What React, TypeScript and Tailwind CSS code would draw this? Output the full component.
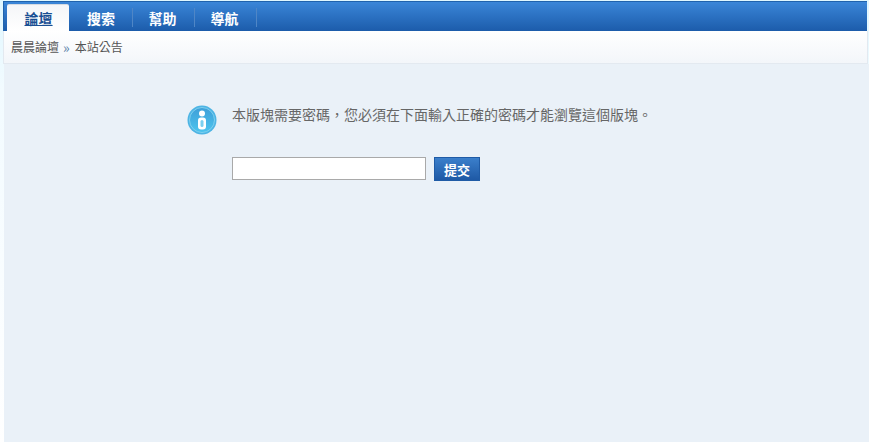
export default function App() {
  const font = { fontFamily: '"Noto Sans CJK TC", "Liberation Sans", sans-serif' };
  return (
    <div className="h-[444px] w-[869px] overflow-hidden bg-gradient-to-b from-[#dff7ff] via-[#f2fbff] via-20% to-white pl-[3px] pt-px" style={font}>
      <div className="mr-[2px] flex h-[30px] border-t border-l border-[#1f63ad] bg-gradient-to-b from-[#3a86d8] to-[#1c5cab] pl-[3px]">
        <div className="mt-[2px] flex h-[27px] w-[62px] items-center justify-center rounded-t-[2px] border-t border-[#d5dbe2] bg-gradient-to-b from-[#f4f6f8] to-white pl-px text-[14px] font-bold leading-none text-[#1a4f93] underline">
          論壇
        </div>
        {[
          { t: "搜索", c: "w-[64px] pl-px" },
          { t: "幫助", c: "w-[62px] pr-[2px]" },
          { t: "導航", c: "w-[62px] pr-[2px]" },
        ].map(({ t, c }) => (
          <div key={t} className={`mt-[6px] flex h-[19px] ${c} items-center justify-center border-r border-[#4f86c6] text-[14px] font-bold leading-none text-white`}>
            {t}
          </div>
        ))}
      </div>
      <div className="mr-px flex h-[33px] items-center border-x border-b border-[#e3e9f0] bg-gradient-to-b from-white to-[#f3f6fa] pl-[7px] text-[12px] text-[#555]">
        <span>晨晨論壇</span>
        <span className="ml-[4px] mr-[5px] text-[14px] leading-none text-[#5b7fa8]">»</span>
        <span>本站公告</span>
      </div>
      <div className="ml-px h-[378px] bg-[#eaf1f8] pl-[183px] pt-[41px]">
        <div className="flex">
          <svg width="30" height="30" viewBox="0 0 30 30" className="shrink-0">
            <defs>
              <linearGradient id="g" x1="0" y1="0" x2="0" y2="1">
                <stop offset="0" stopColor="#3f9fd8" />
                <stop offset="1" stopColor="#4cc4ee" />
              </linearGradient>
            </defs>
            <circle cx="15" cy="15" r="14.5" fill="#4db4e4" />
            <circle cx="15" cy="15" r="12.5" fill="url(#g)" stroke="#7fd0ef" strokeWidth="1" />
            <circle cx="15" cy="8.5" r="3" fill="#fff" />
            <rect x="11" y="12.5" width="8" height="12" rx="3" fill="#fff" />
            <rect x="13.5" y="15" width="3" height="7" rx="1.5" fill="#7bd0f0" />
          </svg>
          <div className="ml-[15px]">
            <p className="-mt-px text-[14px] leading-[20px] text-[#666]">本版塊需要密碼，您必須在下面輸入正確的密碼才能瀏覽這個版塊。</p>
            <div className="mt-[33px] flex items-start">
              <input className="h-[23px] w-[194px] border border-[#a9a9a9] bg-white" />
              <button className="ml-2 flex h-6 w-[46px] items-center justify-center border border-[#1f5ba6] bg-gradient-to-b from-[#3b7fcb] to-[#1e59a5] text-[13px] font-bold leading-none text-white">
                提交
              </button>
            </div>
          </div>
        </div>
      </div>
    </div>
  );
}
